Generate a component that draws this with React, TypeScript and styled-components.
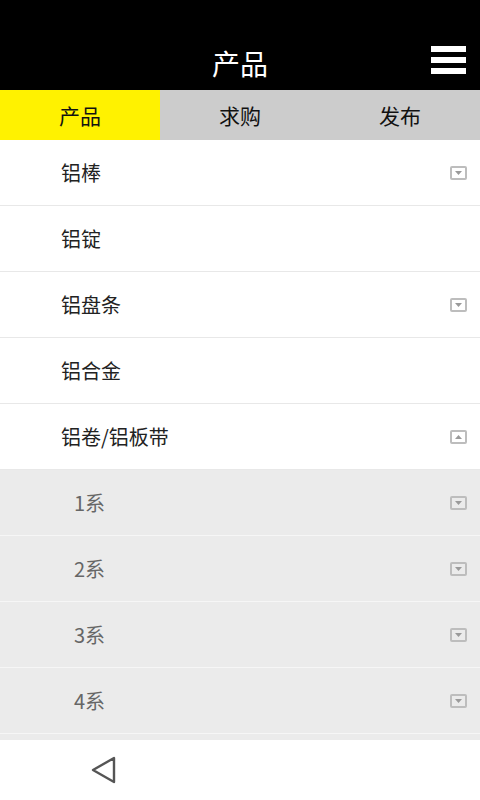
import styled, { createGlobalStyle } from 'styled-components';

const GlobalStyle = createGlobalStyle`
  html, body {
    margin: 0;
    padding: 0;
    height: 100%;
    overflow: hidden;
    background: #fff;
  }
  body {
    font-family: "Noto Sans CJK SC", "Noto Sans", sans-serif;
  }
`;

const Screen = styled.div`
  display: flex;
  flex-direction: column;
  width: 480px;
  height: 800px;
  background: #fff;
`;

const Header = styled.header`
  display: flex;
  align-items: center;
  justify-content: center;
  position: relative;
  height: 90px;
  padding-top: 36px;
  box-sizing: border-box;
  background: #000;
`;

const Title = styled.h1`
  margin: 0;
  color: #fff;
  font-size: 28px;
  font-weight: 400;
  line-height: 1;
`;

const MenuButton = styled.button`
  position: absolute;
  right: 14px;
  top: 46px;
  display: flex;
  flex-direction: column;
  gap: 5px;
  padding: 0;
  border: 0;
  background: none;
`;

const MenuBar = styled.span`
  display: block;
  width: 35px;
  height: 6px;
  background: #fff;
`;

const Tabs = styled.nav`
  display: grid;
  grid-template-columns: repeat(3, 1fr);
  height: 50px;
  background: #cccccc;
`;

const Tab = styled.div<{ $active?: boolean }>`
  display: flex;
  align-items: center;
  justify-content: center;
  background: ${(p) => (p.$active ? '#fff200' : 'transparent')};
  color: #111;
  font-size: 21px;
`;

const List = styled.div`
  flex: 1;
  overflow: hidden;
  background: #ebebeb;
`;

const Row = styled.div<{ $sub?: boolean }>`
  display: flex;
  align-items: center;
  justify-content: space-between;
  height: 65px;
  padding: 0 13px 0 ${(p) => (p.$sub ? '74px' : '61px')};
  border-bottom: 1px solid ${(p) => (p.$sub ? '#f6f6f6' : '#e8e8e8')};
  background: ${(p) => (p.$sub ? '#ebebeb' : '#fff')};
  color: ${(p) => (p.$sub ? '#666' : '#222')};
  font-size: 20px;
`;

const Toggle = styled.span`
  display: flex;
  align-items: center;
  justify-content: center;
  width: 13px;
  height: 10px;
  border: 2px solid #bdbdbd;
  border-radius: 2px;
`;

const BottomBar = styled.footer`
  display: flex;
  align-items: center;
  height: 60px;
  padding-left: 90px;
  background: #fff;
`;

const Arrow = ({ up }: { up?: boolean }) => (
  <Toggle>
    <svg width="7" height="4" viewBox="0 0 7 4">
      <path d={up ? 'M0 4 L3.5 0 L7 4 Z' : 'M0 0 L7 0 L3.5 4 Z'} fill="#9a9a9a" />
    </svg>
  </Toggle>
);

type Item = { label: string; sub?: boolean; arrow?: 'up' | 'down' };

const items: Item[] = [
  { label: '铝棒', arrow: 'down' },
  { label: '铝锭' },
  { label: '铝盘条', arrow: 'down' },
  { label: '铝合金' },
  { label: '铝卷/铝板带', arrow: 'up' },
  { label: '1系', sub: true, arrow: 'down' },
  { label: '2系', sub: true, arrow: 'down' },
  { label: '3系', sub: true, arrow: 'down' },
  { label: '4系', sub: true, arrow: 'down' },
];

const App = () => (
  <Screen>
    <GlobalStyle />
    <Header>
      <Title>产品</Title>
      <MenuButton aria-label="menu">
        <MenuBar />
        <MenuBar />
        <MenuBar />
      </MenuButton>
    </Header>
    <Tabs>
      <Tab $active>产品</Tab>
      <Tab>求购</Tab>
      <Tab>发布</Tab>
    </Tabs>
    <List>
      {items.map((item) => (
        <Row key={item.label} $sub={item.sub}>
          <span>{item.label}</span>
          {item.arrow && <Arrow up={item.arrow === 'up'} />}
        </Row>
      ))}
    </List>
    <BottomBar>
      <svg width="28" height="30" viewBox="0 0 28 30">
        <path d="M24 3 L24 27 L3 15 Z" fill="none" stroke="#555" strokeWidth="2.4" strokeLinejoin="round" />
      </svg>
    </BottomBar>
  </Screen>
);

export default App;
